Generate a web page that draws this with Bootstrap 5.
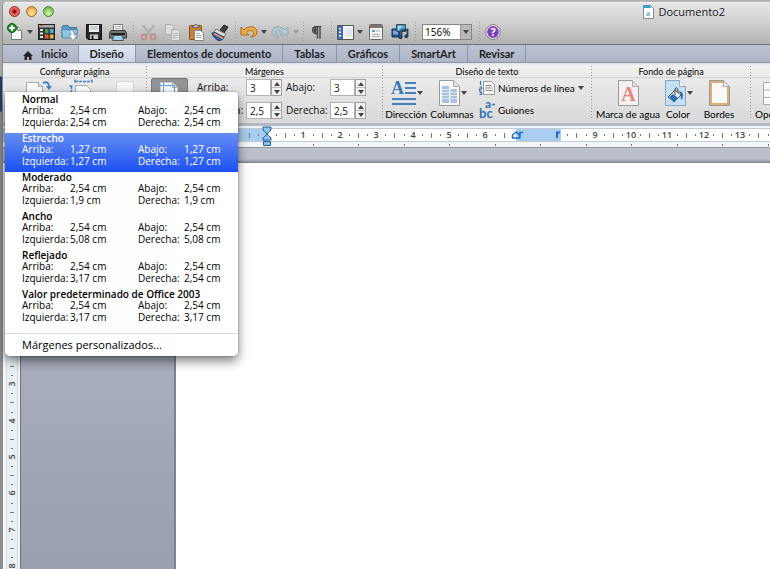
<!DOCTYPE html>
<html lang="es">
<head>
<meta charset="utf-8">
<meta name="viewport" content="width=device-width, initial-scale=1">
<title>Documento2</title>
<link rel="stylesheet" href="https://cdn.jsdelivr.net/npm/bootstrap@5.3.0/dist/css/bootstrap.min.css">
<style>
  body { font-family: "Open Sans", "Noto Sans", sans-serif; font-size: 10px; line-height: 12px; color: #111; background: #fff; }
  .desk { background: linear-gradient(#b4b4b4 0, #a5a5a5 76px, #1d3564 77px, #223e74 111px, #8b8d92 112px, #8b8d92); padding: 2px 0 0 2px; }
  .win { border-left: 1px solid #8a8a8a; border-top: 1px solid #f4f4f4; border-top-left-radius: 5px; overflow: hidden; background: #fff; }
  .chrome { background: linear-gradient(#e6e6e6, #cfcfcf 50%, #b1b1b1); border-bottom: 1px solid #6f737b; }
  .titlebar { height: 17px; padding: 0 45px 0 6px; font-size: 11px; color: #222; }
  .lights { gap: 6px; }
  .light { width: 11px; height: 11px; border: 1px solid #666; border-radius: 50%; padding: 0; }
  .red { background: radial-gradient(circle, #6d0d0d 15%, #e8413c 35%, #f59a93 90%); border-color: #8d2b27; }
  .amber { background: radial-gradient(circle at 50% 75%, #ffe9a0, #f0a53a 80%); border-color: #94692a; }
  .green { background: radial-gradient(circle at 50% 75%, #d5f5ae, #74b84c 80%); border-color: #4f7c36; }
  .tools { height: 24px; padding-left: 1px; }
  .tool, .drop, .big, .wide { border: 0; background: none; padding: 0; color: inherit; display: flex; align-items: center; justify-content: center; }
  .tool { width: 24px; height: 22px; }
  .tool.slim { width: 22px; }
  .drop { width: 8px; height: 22px; }
  .drop::after, .caret::after { content: ""; border: 3px solid transparent; border-top: 4px solid #444; border-bottom: 0; }
  .drop.off::after { border-top-color: #999; }
  .rule { width: 6px; height: 20px; background: repeating-linear-gradient(#999 0 1px, transparent 1px 3px) center / 1px 100% no-repeat; }
  .zoomer { width: 50px; height: 16px; margin: 0 4px; border: 1px solid #858585; background: #fff; }
  .zoomer select { appearance: none; border: 0; background: #fff; padding: 0 0 0 2px; width: 37px; font-size: 10px; line-height: 14px; height: 14px; color: #000; }
  .zoomer span { width: 11px; background: #b9b9b9; border-left: 1px solid #999; }
  .tabs { height: 18px; background: linear-gradient(#bcc3d2, #adb5c6); border-bottom: 1px solid #8d95a5; }
  .tabs a { color: #222; font: 700 11px/18px Lato, sans-serif; padding: 0 11px; border-right: 1px solid #8f96a5; text-decoration: none; white-space: nowrap; }
  .tabs a.now { background: linear-gradient(#dde3ef, #ccd5e6); }
  .tabs a.first { padding-left: 20px; padding-right: 10px; }
  .ribbon { background: linear-gradient(#dfe5ee 0, #f1f1f1 3px, #ebebeb 12px, #d9d9d9); height: 60px; padding-top: 3px; overflow: hidden; }
  .group { height: 56px; flex: none; }
  .group h2 { font: 400 9px/11px Lato, sans-serif; height: 12px; margin: 0; text-align: center; color: #000; border-bottom: 1px solid #d2d2d2; white-space: nowrap; }
  .body { height: 44px; white-space: nowrap; }
  .vr-dots { width: 1px; height: 54px; background: repeating-linear-gradient(#999 0 1px, transparent 1px 3px); flex: none; }
  .g-page { width: 143px; } .g-margin { width: 235px; } .g-text { width: 208px; } .g-back { width: 158px; } .g-grid { width: 60px; }
  .g-page .body { padding-left: 14px; } .g-margin .body { padding-left: 4px; } .g-back .body { padding-left: 6px; } .g-grid .body { padding-left: 4px; }
  .pressed { width: 37px; height: 42px; background: #949494; border: 1px solid #777; border-radius: 2px; padding: 2px; }
  .fields { display: grid; grid-template-columns: 49px 40px 44px 37px; grid-auto-rows: 17px; row-gap: 6px; margin-left: 9px; padding-top: 1px; }
  .fields label { line-height: 16px; }
  .spin { height: 17px; width: 36px; }
  .spin input { width: 25px; height: 17px; border: 1px solid #b2b2b2; padding: 0 0 0 3px; background: #fff; color: #111; line-height: 15px; font-size: 10px; }
  .spin div { width: 11px; border: 1px solid #a2a2a2; background: #f2f2f2; }
  .spin button { border: 0; background: none; padding: 0; height: 7px; width: 9px; display: flex; align-items: center; justify-content: center; }
  .up::after { content: ""; border: 3px solid transparent; border-bottom: 4px solid #444; border-top: 0; }
  .down::after { content: ""; border: 3px solid transparent; border-top: 4px solid #444; border-bottom: 0; }
  .spin .down { border-top: 1px solid #bbb; height: 8px; }
  .big, .wide { font: 400 10px/12px Lato, sans-serif; color: #000; }
  .big { flex-direction: column; width: 46px; height: 44px; justify-content: flex-start; }
  .big .pic { height: 30px; display: flex; align-items: center; gap: 1px; }
  .big .caret { padding-left: 2px; }
  .w-water { width: 60px; } .w-color { width: 40px; } .w-edge { width: 42px; }
  .wide { height: 24px; gap: 3px; justify-content: flex-start; }
  .wide.upper { height: 20px; }
  .wide .caret { display: flex; }
  .ruler { height: 25px; background: #f3f6f9; border-top: 3px solid #b3bac6; border-bottom: 1px solid #8f949d; }
  .shelf { height: 15px; background: linear-gradient(#bcc1cc, #b7bdc9 80%, #8f949e); border-bottom: 1px solid #83878f; }
  .num { font: 600 9px "Open Sans", sans-serif; fill: #444; text-anchor: middle; }
  .side { width: 18px; background: #f3f6f9; flex: none; border-right: 1px solid #6d7480; }
  .board { width: 155px; flex: none; background: linear-gradient(#b4bac5, #a6acb9 55%, #98a0ad); border-right: 2px solid #7c8490; }
  .popup { position: absolute; left: 5px; top: 92px; width: 233px; padding: 2px 0 0; background: rgba(255,255,255,.98); border-radius: 0 3px 5px 5px; box-shadow: 0 5px 11px rgba(0,0,0,.5), 0 0 2px rgba(0,0,0,.4); }
  .pick { display: grid; grid-template-columns: 48px 68px 46px 1fr; grid-template-rows: 11px 12px 12px; width: 100%; border: 0; background: none; padding: 0 10px 4px 17px; text-align: left; font-size: 10px; line-height: 11px; color: #000; white-space: nowrap; }
  .pick b { grid-column: 1 / -1; font-weight: 600; }
  .pick.chosen { color: #fff; background: linear-gradient(#668df4, #1c50f0); }
  .custom { display: block; width: 100%; border: 0; border-top: 1px solid #ddd; background: none; margin-top: 5px; padding: 3px 17px 3px; line-height: 16px; font-size: 11px; text-align: left; color: #000; }
</style>
<script src="https://cdn.jsdelivr.net/npm/bootstrap@5.3.0/dist/js/bootstrap.bundle.min.js"></script>
</head>
<body>
<div class="desk vh-100 overflow-hidden">
<div class="win h-100 d-flex flex-column">
  <header class="chrome">
    <div class="titlebar d-flex align-items-center">
      <div class="lights d-flex me-auto">
        <button class="light red" aria-label="Cerrar"></button>
        <button class="light amber" aria-label="Minimizar"></button>
        <button class="light green" aria-label="Ampliar"></button>
      </div>
      <svg width="11" height="14" viewBox="0 0 11 14" class="me-1"><path d="M.5.5h7l3 3v10H.5z" fill="#fff" stroke="#888"/><path d="M0 0h7l1 3H0z" fill="#3a9fc9"/><text x="3" y="11" font-size="9" font-family="Liberation Serif" fill="#2d83ad">a</text></svg>
      <span>Documento2</span>
    </div>
    <div class="tools d-flex align-items-center">
      <button class="tool slim" aria-label="Nuevo"><svg width="17" height="18" viewBox="0 0 17 18"><path d="M4.500 3.500h6l4 4v9h-10z" fill="#fafafa" stroke="#777"/><path d="M10.500 3.500v4h4" fill="#ddd" stroke="#888"/><circle cx="5" cy="5" r="4.500" fill="#2f8b36" stroke="#14591a"/><path d="M5 2.200v5.600M2.200 5h5.600" stroke="#fff" stroke-width="2"/></svg></button>
      <button class="drop" aria-label="Opciones de nuevo"></button>
      <button class="tool" aria-label="Galería"><svg width="17" height="16" viewBox="0 0 17 16"><rect x=".5" y=".5" width="16" height="15" fill="#353535" stroke="#222"/><path d="M1 1h15v2.500H1z" fill="#aaa"/><path d="M2 1.500h3" stroke="#e55"/><path d="M2 5h3v2H2zM2 8.500h3v2H2zM2 12h3v2H2z" fill="#ddd"/><path d="M7 5h3.500v4H7z" fill="#45a349"/><path d="M12 5h3.500v4H12z" fill="#58a7e8"/><path d="M7 10.500h3.500v4H7z" fill="#e65b31"/><path d="M12 10.500h3.500v4H12z" fill="#f3b332"/></svg></button>
      <button class="tool" aria-label="Abrir"><svg width="18" height="17" viewBox="0 0 18 17"><path d="M1 3.500l1-2h5l1 2h7.500v9.500H1z" fill="#5b9cc8" stroke="#427797"/><path d="M.5 5.500h16l-1 8.500h-14z" fill="#91c5e4" stroke="#5089ad"/><path d="M8 6c4 0 5 2 5 5h3.500L12 16.500 7.500 11H10c0-2-.5-3.500-2-5z" fill="#fff" stroke="#678" stroke-width=".6"/></svg></button>
      <button class="tool" aria-label="Guardar"><svg width="16" height="16" viewBox="0 0 16 16"><path d="M.5.5h15v15H2l-1.500-1.500z" fill="#29292d" stroke="#111"/><path d="M3 1h10v7H3z" fill="#edf1f4"/><path d="M4 3h8M4 5h8" stroke="#a8b3bb"/><path d="M4 10.500h8V15H4z" fill="#ccc"/><path d="M5.500 11.500h2V15h-2z" fill="#222"/></svg></button>
      <button class="tool" aria-label="Imprimir"><svg width="18" height="17" viewBox="0 0 18 17"><path d="M4.500.5h9v7h-9z" fill="#fcfcfc" stroke="#777"/><path d="M6 2.500h6M6 4.500h6" stroke="#aaa"/><path d="M2 6.500h14l1.500 3v4.500H.5V9.500z" fill="#777" stroke="#333"/><path d="M2 10h14" stroke="#222" stroke-width="2"/><path d="M4.500 11.500h9l1 5h-11z" fill="#9cd3ec" stroke="#555"/></svg></button>
      <span class="rule"></span>
      <button class="tool" aria-label="Cortar"><svg width="17" height="17" viewBox="0 0 17 17" fill="none"><path d="M3 1.500l8 10M14 1.500l-8 10" stroke="#aaa" stroke-width="2"/><circle cx="4" cy="13" r="2.500" stroke="#c28c8c" stroke-width="1.800"/><circle cx="13" cy="13" r="2.500" stroke="#c28c8c" stroke-width="1.800"/></svg></button>
      <button class="tool" aria-label="Copiar"><svg width="17" height="17" viewBox="0 0 17 17" fill="#ddd" stroke="#adadad"><path d="M1.500.5h6l2 2v8h-8z"/><path d="M7.500 5.500h6l2 2v9h-8z"/><path d="M9 9.500h5M9 11.500h5M9 13.500h4" stroke="#bbb"/></svg></button>
      <button class="tool" aria-label="Pegar"><svg width="17" height="17" viewBox="0 0 17 17"><rect x="1.500" y="1.500" width="12" height="14" rx="1" fill="#c68335" stroke="#79501e"/><path d="M4.500 3.500V2h1.500L7 .5h1.500L9.500 2H11v1.500z" fill="#ccc" stroke="#666"/><path d="M6.500 6.500h6l3 3v7h-9z" fill="#fff" stroke="#888"/><path d="M8 9.500h4M8 11.500h6M8 13.500h6" stroke="#aaa"/></svg></button>
      <button class="tool" aria-label="Copiar formato"><svg width="18" height="17" viewBox="0 0 18 17"><path d="M9 6l4-5 4 2-4 6z" fill="#3c3c44" stroke="#222"/><path d="M5 5l10 5-2 3-10-5z" fill="#ddd" stroke="#777"/><path d="M1 9c2 0 2-1 3-.5l9 5c-1 2-3 3-5 3-3-.5-6-4-7-7.500z" fill="#3158ad" stroke="#25376f"/><path d="M3 9.500l9 5" stroke="#e7a94c" stroke-width="1.500"/></svg></button>
      <span class="rule"></span>
      <button class="tool slim" aria-label="Deshacer"><svg width="18" height="14" viewBox="0 0 18 14"><path d="M1 2v8h8L6.500 7.500C9 4.500 13 5 13.500 7.500c.5 2-1 3.500-3 4.500 3.500.5 6.500-2 6.500-5 0-5.500-8-7.500-13-2z" fill="#f2ac45" stroke="#a66b1c"/></svg></button>
      <button class="drop" aria-label="Lista de deshacer"></button>
      <button class="tool" aria-label="Rehacer"><svg width="18" height="14" viewBox="0 0 18 14"><path d="M17 2v8H9l2.500-2.500C9 4.500 5 5 4.500 7.500c-.5 2 1 3.500 3 4.500C4 12.500 1 10 1 7c0-5.500 8-7.500 13-2z" fill="#b4c8d6" stroke="#91a7b7"/></svg></button>
      <button class="drop off" aria-label="Lista de rehacer"></button>
      <span class="rule"></span>
      <button class="tool slim" aria-label="Marcas de párrafo"><svg width="10" height="13" viewBox="0 0 10 13"><path d="M9.500.5H4a3.500 3.500 0 000 7h1M5.500 1v11.500M8 1v11.500" fill="none" stroke="#444" stroke-width="1.400"/><path d="M4.500 1a3 3 0 000 6z" fill="#444"/></svg></button>
      <span class="rule"></span>
      <button class="tool slim" aria-label="Barra lateral"><svg width="17" height="15" viewBox="0 0 17 15"><path d="M.5.500h16v14H.5z" fill="#f5f7fc" stroke="#555"/><path d="M1 1h5v13H1z" fill="#406cb4"/><path d="M2 3h2v1.500H2zM2 6.500h2V8H2zM2 10h2v1.500H2z" fill="#fff"/><path d="M8 3h7v9H8z" fill="#e1e7f2"/></svg></button>
      <button class="drop" aria-label="Opciones de barra lateral"></button>
      <button class="tool" aria-label="Cuadro de herramientas"><svg width="14" height="16" viewBox="0 0 14 16"><rect x=".5" y=".5" width="13" height="15" rx="1" fill="#f2f2f2" stroke="#666"/><path d="M1 1h12v3H1z" fill="#777"/><circle cx="2.500" cy="2.500" r="1" fill="#e44"/><path d="M3 6h3v2H3z" fill="#57a4dc"/><path d="M7 7h4M3 10.500h8M3 12.500h8" stroke="#aaa"/></svg></button>
      <button class="tool" aria-label="Multimedia"><svg width="18" height="16" viewBox="0 0 18 16"><path d="M1 5h8v8H1z" fill="#244f84" stroke="#16365e"/><path d="M2 6.500h5v4H2z" fill="#73a9df"/><path d="M5.500.5h9v7h-9z" fill="#3ca5df" stroke="#444"/><path d="M7 2h5l-5 4z" fill="#b1e0fa"/><path d="M10.500 13V6.500l6-1V12" fill="none" stroke="#29415e" stroke-width="1.800"/><circle cx="9.500" cy="13.200" r="2" fill="#29415e"/><circle cx="15.300" cy="12.300" r="2" fill="#29415e"/></svg></button>
      <span class="rule"></span>
      <div class="zoomer d-flex"><select aria-label="Zoom"><option>156%</option></select><span class="drop h-100"></span></div>
      <span class="rule"></span>
      <button class="tool slim" aria-label="Ayuda"><svg width="16" height="16" viewBox="0 0 16 16"><circle cx="8" cy="8" r="7.300" fill="#fff" stroke="#777"/><circle cx="8" cy="8" r="5.900" fill="#7b3fbf"/><text x="8" y="12" font-size="11" font-weight="700" font-family="Open Sans" text-anchor="middle" fill="#fff">?</text></svg></button>
    </div>
  </header>

  <nav class="tabs d-flex">
    <a href="#" class="first"><svg width="10" height="9" viewBox="0 0 10 9" class="me-2"><path d="M5 0l5 5H8.500v4H6V6H4v3H1.500V5H0z" fill="#222"/></svg>Inicio</a>
    <a href="#" class="now" aria-current="page">Diseño</a>
    <a href="#">Elementos de documento</a>
    <a href="#">Tablas</a>
    <a href="#">Gráficos</a>
    <a href="#">SmartArt</a>
    <a href="#">Revisar</a>
  </nav>

  <main class="ribbon d-flex">
    <section class="group g-page"><h2>Configurar página</h2>
      <div class="body d-flex">
        <button class="big" aria-label="Orientación"><span class="pic"><svg width="28" height="26" viewBox="0 0 28 26"><path d="M1.500 2.500h12l4 4v18h-16z" fill="#fafafa" stroke="#aaa"/><path d="M13.500 2.500v4h4" fill="#ddd" stroke="#aaa"/><path d="M18 3c4-2 6 0 6 4" fill="none" stroke="#3e80c8" stroke-width="2"/><path d="M21 6h6l-3 4z" fill="#3e80c8"/></svg></span></button>
        <button class="big" aria-label="Tamaño"><span class="pic"><svg width="28" height="28" viewBox="0 0 28 28"><path d="M7.500 6.500h11l4 4v16h-15z" fill="#fafafa" stroke="#aaa"/><path d="M7 2.500h17M7 .5v4M24 .5v4M3.500 7v19M1.500 7h4" stroke="#3e80c8" stroke-width="1.500" stroke-dasharray="3 1"/></svg></span></button>
        <button class="big" aria-label="Saltos"><span class="pic"><svg width="20" height="26" viewBox="0 0 20 26"><path d="M1.500 1.500h17v23h-17z" fill="#f6f6f6" stroke="#d5d5d5"/></svg></span></button>
      </div>
    </section>
    <span class="vr-dots"></span>
    <section class="group g-margin"><h2>Márgenes</h2>
      <div class="body d-flex">
        <button class="pressed d-flex justify-content-center" aria-label="Márgenes" aria-expanded="true"><svg width="30" height="30" viewBox="0 0 30 30"><path d="M5.500 1.500h12l5 5v22h-17z" fill="#fafafa" stroke="#ccc"/><path d="M17.500 1.500v5h5" fill="#ddd" stroke="#aaa"/><path d="M1 4.500h18M8.500 0v29M19.500 4v24" stroke="#5ba4e0"/></svg></button>
        <div class="fields">
          <label for="m1">Arriba:</label><div class="spin d-flex"><input id="m1" value="3"><div><button class="up" aria-label="Más"></button><button class="down" aria-label="Menos"></button></div></div>
          <label for="m2">Abajo:</label><div class="spin d-flex"><input id="m2" value="3"><div><button class="up" aria-label="Más"></button><button class="down" aria-label="Menos"></button></div></div>
          <label for="m3">Izquierda:</label><div class="spin d-flex"><input id="m3" value="2,5"><div><button class="up" aria-label="Más"></button><button class="down" aria-label="Menos"></button></div></div>
          <label for="m4">Derecha:</label><div class="spin d-flex"><input id="m4" value="2,5"><div><button class="up" aria-label="Más"></button><button class="down" aria-label="Menos"></button></div></div>
        </div>
      </div>
    </section>
    <span class="vr-dots"></span>
    <section class="group g-text"><h2>Diseño de texto</h2>
      <div class="body d-flex">
        <button class="big"><span class="pic caret"><svg width="25" height="26" viewBox="0 0 25 26"><text x="0" y="14" font-family="Liberation Serif" font-weight="700" font-size="18" fill="#3b78b5">A</text><path d="M14 3h11M14 8h11M14 13h11M1 19h24M1 24h24" stroke="#4680bd" stroke-width="2"/></svg></span>Dirección</button>
        <button class="big"><span class="pic caret"><svg width="21" height="26" viewBox="0 0 21 26"><path d="M.5.5h14l6 6v19H.5z" fill="#fafafa" stroke="#999"/><path d="M14.500.5v6h6" fill="#e4e4e4" stroke="#aaa"/><path d="M3 6h7v17H3zM11.500 9h6.500v14h-6.500z" fill="#a9c1df"/><path d="M3 9.500h7M3 12.500h15M3 15.500h15M3 18.500h15" stroke="#dce7f4"/></svg></span>Columnas</button>
        <div class="d-flex flex-column ms-1">
          <button class="wide upper"><svg width="16" height="16" viewBox="0 0 16 16"><path d="M4.500 1.500h8l3 3v10h-11z" fill="#f6f6f6" stroke="#999"/><path d="M6.500 5.500h6M6.500 8h7M6.500 10.500h7" stroke="#888"/><path d="M1.500 1v4M.5 7h2v2h-2v2h2M.5 12.500h2v2H.5" fill="none" stroke="#2d73bf" stroke-width="1.200"/></svg>Números de línea<span class="caret"></span></button>
          <button class="wide"><svg width="16" height="24" viewBox="0 0 16 24" fill="#3570b5" font-family="Lato" font-weight="700"><text x="6" y="10" font-size="12">a</text><text x="0" y="20" font-size="13">bc</text><path d="M13 6.500h3" stroke="#3570b5" stroke-width="1.400"/></svg>Guiones</button>
        </div>
      </div>
    </section>
    <span class="vr-dots"></span>
    <section class="group g-back"><h2>Fondo de página</h2>
      <div class="body d-flex">
        <button class="big w-water"><span class="pic"><svg width="21" height="26" viewBox="0 0 21 26"><path d="M.5.5h14l6 6v19H.5z" fill="#f4f0f0" stroke="#999"/><path d="M14.500.5v6h6" fill="#e4e4e4" stroke="#aaa"/><text x="10.500" y="21" text-anchor="middle" font-family="Liberation Serif" font-weight="700" font-size="20" fill="#e08585">A</text></svg></span>Marca de agua</button>
        <button class="big w-color"><span class="pic caret"><svg width="21" height="26" viewBox="0 0 21 26"><path d="M.5.5h14l6 6v19H.5z" fill="#c3e0f7" stroke="#82a6c4"/><path d="M14.500.5v6h6" fill="#f2f7fb" stroke="#9ab"/><path d="M3 17l7-7 6 5-7 7z" fill="#eee" stroke="#555"/><path d="M4 17l4-3 5 4-4 4z" fill="#2c70b8"/><path d="M10 15V9q2-3 3 1v3" fill="none" stroke="#444"/><path d="M14 11q6 1 3 9-2-2-1-5z" fill="#2868ad"/></svg></span>Color</button>
        <button class="big w-edge"><span class="pic"><svg width="21" height="26" viewBox="0 0 21 26"><path d="M.5.5h14l6 6v19H.5z" fill="#fafafa" stroke="#999"/><path d="M2 2h12l5 5v17H2z" fill="none" stroke="#dcae75" stroke-width="2"/><path d="M14.500.5v6h6z" fill="#eee" stroke="#aaa"/></svg></span>Bordes</button>
      </div>
    </section>
    <span class="vr-dots"></span>
    <section class="group g-grid"><h2></h2>
      <div class="body"><button class="big align-items-start"><span class="pic ps-2"><svg width="36" height="23" viewBox="0 0 36 23"><path d="M.5.500h35v22H.5zM.5 8h35M.5 15.500h35M9.500 0v23M18.500 0v23M27.500 0v23" fill="#fafafa" stroke="#aaa"/></svg></span>Opciones</button></div>
    </section>
  </main>

  <div class="ruler"><svg id="top" class="d-block" width="100%" height="21"></svg></div>
  <div class="shelf"></div>
  <div class="d-flex flex-grow-1 overflow-hidden">
    <div class="side"><svg id="left" class="d-block" width="17" height="100%"></svg></div>
    <div class="board"></div>
    <div class="flex-grow-1 bg-white"></div>
  </div>
</div>
</div>

<div class="popup" role="menu" aria-label="Márgenes">
  <button class="pick"><b>Normal</b><span>Arriba:</span><span>2,54 cm</span><span>Abajo:</span><span>2,54 cm</span><span>Izquierda:</span><span>2,54 cm</span><span>Derecha:</span><span>2,54 cm</span></button>
  <button class="pick chosen"><b>Estrecho</b><span>Arriba:</span><span>1,27 cm</span><span>Abajo:</span><span>1,27 cm</span><span>Izquierda:</span><span>1,27 cm</span><span>Derecha:</span><span>1,27 cm</span></button>
  <button class="pick"><b>Moderado</b><span>Arriba:</span><span>2,54 cm</span><span>Abajo:</span><span>2,54 cm</span><span>Izquierda:</span><span>1,9 cm</span><span>Derecha:</span><span>1,9 cm</span></button>
  <button class="pick"><b>Ancho</b><span>Arriba:</span><span>2,54 cm</span><span>Abajo:</span><span>2,54 cm</span><span>Izquierda:</span><span>5,08 cm</span><span>Derecha:</span><span>5,08 cm</span></button>
  <button class="pick"><b>Reflejado</b><span>Arriba:</span><span>2,54 cm</span><span>Abajo:</span><span>2,54 cm</span><span>Izquierda:</span><span>3,17 cm</span><span>Derecha:</span><span>2,54 cm</span></button>
  <button class="pick"><b>Valor predeterminado de Office 2003</b><span>Arriba:</span><span>2,54 cm</span><span>Abajo:</span><span>2,54 cm</span><span>Izquierda:</span><span>3,17 cm</span><span>Derecha:</span><span>3,17 cm</span></button>
  <button class="custom">Márgenes personalizados...</button>
</div>

<script>
  // Rulers: one centimetre at 156% zoom
  const cm = 36.4;
  const zero = 264;
  const top_ = document.getElementById('top');
  const left_ = document.getElementById('left');
  const wide = top_.getBoundingClientRect().width;
  const tall = left_.getBoundingClientRect().height;

  let h = '<rect y="3" width="100%" height="12" fill="#fff"/><rect y="3" width="' + zero + '" height="12" fill="#a9cdee"/>' +
          '<rect x="513" y="3" width="45" height="12" fill="#a9cdee"/><path d="M0 2.500h3000M0 15.500h3000" stroke="#c3cad3"/>';
  for (let q = -2; zero + q * cm / 4 < wide - 2; q++) {
    const x = Math.round(zero + q * cm / 4);
    if (q === 0 || (x > 508 && x < 562)) continue;
    if (q > 0 && q % 4 === 0) h += '<text class="num" x="' + x + '" y="12">' + q / 4 + '</text>';
    else h += '<path d="M' + x + '.5 ' + (q % 2 ? '8v2' : '7v5') + '" stroke="#777"/>';
  }
  for (let t = 1; zero + t * 45.5 < wide; t++) h += '<path d="M' + Math.round(zero + t * 45.5) + '.5 18v2" stroke="#777"/>';
  h += '<path d="M260 1h8v3l-4 4-4-4zM260 14v-2l4-4 4 4v2zM260.500 15.500h7v4h-7z" fill="#8ec2ee" stroke="#245b9a"/>' +
       '<path d="M509.500 12v-3l4-3 3 3v3zM517 12V6.500h3" fill="none" stroke="#1f6cc4" stroke-width="1.500"/>' +
       '<path d="M554 12V6.500h3" fill="none" stroke="#1f6cc4" stroke-width="2"/>';
  top_.innerHTML = h;

  const origin = 112;
  let v = '<rect x="3" width="11" height="100%" fill="#eaf0f5"/><path d="M3.500 0v3000M14.500 0v3000" stroke="#d3d9df"/>';
  for (let q = 10; origin + q * cm / 4 < tall; q++) {
    const y = Math.round(origin + q * cm / 4);
    if (q % 4 === 0) v += '<text class="num" transform="translate(12 ' + y + ') rotate(-90)">' + q / 4 + '</text>';
    else v += '<path d="M' + (q % 2 ? '8 ' : '7 ') + y + '.5h' + (q % 2 ? 2 : 4) + '" stroke="#777"/>';
  }
  left_.innerHTML = v;
</script>
</body>
</html>
